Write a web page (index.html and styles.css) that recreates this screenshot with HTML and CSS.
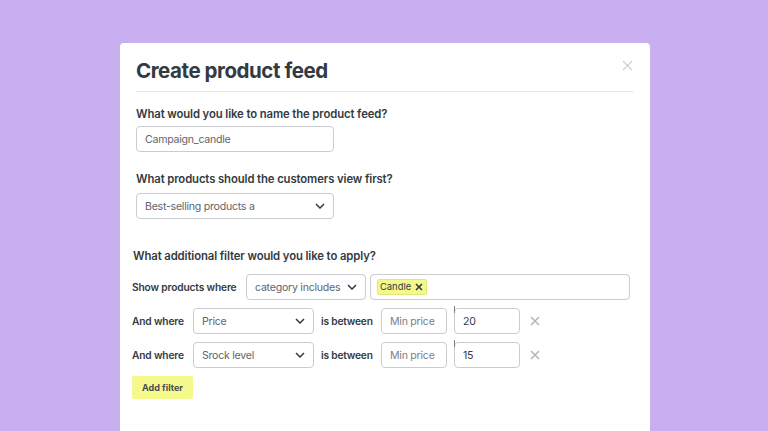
FILE: index.html
```html
<!DOCTYPE html>
<html>
<head>
<meta charset="utf-8">
<link rel="stylesheet" href="styles.css">
</head>
<body>
<div class="modal">
  <div class="head">
    <h1 class="title">Create product feed</h1>
    <span class="close" aria-label="close"><svg width="11" height="11" viewBox="0 0 11 11"><path d="M1 1L10 10M10 1L1 10" stroke="#cfd1d6" stroke-width="1.3" fill="none"/></svg></span>
  </div>
  <div class="section">
    <div class="label">What would you like to name the product feed?</div>
    <div class="field w198"><span class="val">Campaign_candle</span></div>
  </div>
  <div class="section s2">
    <div class="label">What products should the customers view first?</div>
    <div class="field w198 sel"><span class="val">Best-selling products a</span><svg class="chev" width="10" height="6" viewBox="0 0 10 6"><path d="M1 1L5 5L9 1" stroke="#333a42" stroke-width="1.5" fill="none"/></svg></div>
  </div>
  <div class="section s3">
    <div class="label l3">What additional filter would you like to apply?</div>
    <div class="row r1">
      <span class="rowlabel">Show products where</span>
      <div class="field w120 sel"><span class="val">category includes</span><svg class="chev" width="10" height="6" viewBox="0 0 10 6"><path d="M1 1L5 5L9 1" stroke="#333a42" stroke-width="1.5" fill="none"/></svg></div>
      <div class="field grow"><span class="tag">Candle <svg width="8" height="8" viewBox="0 0 8 8"><path d="M1 1L7 7M7 1L1 7" stroke="#333a42" stroke-width="1.6" fill="none"/></svg></span></div>
    </div>
    <div class="row">
      <span class="rowlabel">And where</span>
      <div class="field w121 sel"><span class="val">Price</span><svg class="chev" width="10" height="6" viewBox="0 0 10 6"><path d="M1 1L5 5L9 1" stroke="#333a42" stroke-width="1.5" fill="none"/></svg></div>
      <span class="between">is between</span>
      <div class="field w66"><span class="ph">Min price</span></div>
      <div class="field w66 cursor"><span class="val dark">20</span></div>
      <span class="rm"><svg width="10" height="10" viewBox="0 0 10 10"><path d="M1 1L9 9M9 1L1 9" stroke="#b3b7bd" stroke-width="1.6" fill="none"/></svg></span>
    </div>
    <div class="row">
      <span class="rowlabel">And where</span>
      <div class="field w121 sel"><span class="val">Srock level</span><svg class="chev" width="10" height="6" viewBox="0 0 10 6"><path d="M1 1L5 5L9 1" stroke="#333a42" stroke-width="1.5" fill="none"/></svg></div>
      <span class="between">is between</span>
      <div class="field w66"><span class="ph">Min price</span></div>
      <div class="field w66 cursor"><span class="val dark">15</span></div>
      <span class="rm"><svg width="10" height="10" viewBox="0 0 10 10"><path d="M1 1L9 9M9 1L1 9" stroke="#b3b7bd" stroke-width="1.6" fill="none"/></svg></span>
    </div>
    <button class="add">Add filter</button>
  </div>
</div>
</body>
</html>
```
FILE: styles.css
```css
html, body {
  margin: 0;
  padding: 0;
  height: 100%;
  overflow: hidden;
}
body {
  background: #c8aff0;
  font-family: Inter, "Noto Sans", sans-serif;
  color: #333a42;
}
.modal {
  box-sizing: border-box;
  margin: 43px 0 0 120px;
  width: 530px;
  height: 388px;
  background: #fff;
  border-radius: 4px 4px 0 0;
  padding: 14px 16px 0 16px;
}
.head {
  position: relative;
  border-bottom: 1px solid #e9e9ec;
  padding-bottom: 6px;
}
.title {
  margin: 0;
  font-size: 20.5px;
  line-height: 28px;
  font-weight: 700;
  letter-spacing: -0.45px;
  color: #333a42;
}
.close {
  position: absolute;
  right: 1px;
  top: 3px;
  display: block;
  line-height: 0;
}
.section {
  margin-top: 14px;
}
.s2 { margin-top: 19px; }
.s2 .label { margin-bottom: 6px; }
.s3 { margin-top: 29px; }
.label {
  font-size: 11.3px;
  font-weight: 600;
  line-height: 16px;
  margin-bottom: 4px;
  letter-spacing: -0.1px;
  white-space: nowrap;
}
.s3 .l3 { margin-left: -3px; margin-bottom: 10px; }
.field {
  box-sizing: border-box;
  flex-shrink: 0;
  height: 26px;
  border: 1px solid #c9ccd1;
  border-radius: 4px;
  display: flex;
  align-items: center;
  padding: 0 8px;
  font-size: 10.6px;
  letter-spacing: -0.25px;
  color: #5f656d;
  background: #fff;
  white-space: nowrap;
}
.sel { justify-content: space-between; padding-right: 8px; }
.w198 { width: 198px; }
.w120 { width: 120px; }
.w121 { width: 121px; }
.w66 { width: 66px; }
.grow { width: 260px; padding-left: 6px; }
.ph { color: #7b8087; }
.dark { color: #333a42; }
.row {
  display: flex;
  align-items: center;
  margin-left: -4px;
  margin-top: 8px;
}
.r1 { margin-top: 0; }
.rowlabel {
  font-size: 10.2px;
  font-weight: 600;
  width: 61px;
  flex-shrink: 0;
  letter-spacing: -0.15px;
  white-space: nowrap;
}
.r1 .rowlabel { width: 114px; }
.r1 .field + .field { margin-left: 4px; }
.between {
  font-size: 10.2px;
  font-weight: 600;
  letter-spacing: -0.2px;
  white-space: nowrap;
  width: 60px;
  margin-left: 7px;
  flex-shrink: 0;
}
.w66 + .w66 { margin-left: 7px; }
.cursor { position: relative; }
.cursor::before {
  content: "";
  position: absolute;
  left: -1px;
  top: -3px;
  width: 1px;
  height: 7px;
  background: #7b8087;
}
.tag {
  display: inline-flex;
  align-items: center;
  gap: 4px;
  background: #f4f78a;
  border: 1px solid #e3e77a;
  border-radius: 2px;
  padding: 1px 3px 1px 2px;
  font-size: 9.4px;
  letter-spacing: 0;
  color: #333a42;
  line-height: 12px;
}
.rm {
  margin-left: 10px;
  line-height: 0;
}
.add {
  display: block;
  margin: 8px 0 0 -4px;
  border: 0;
  background: #f5f98c;
  border-radius: 2px;
  width: 61px;
  height: 23px;
  font-family: inherit;
  font-size: 9px;
  font-weight: 700;
  color: #464c54;
  padding: 0;
}
```
